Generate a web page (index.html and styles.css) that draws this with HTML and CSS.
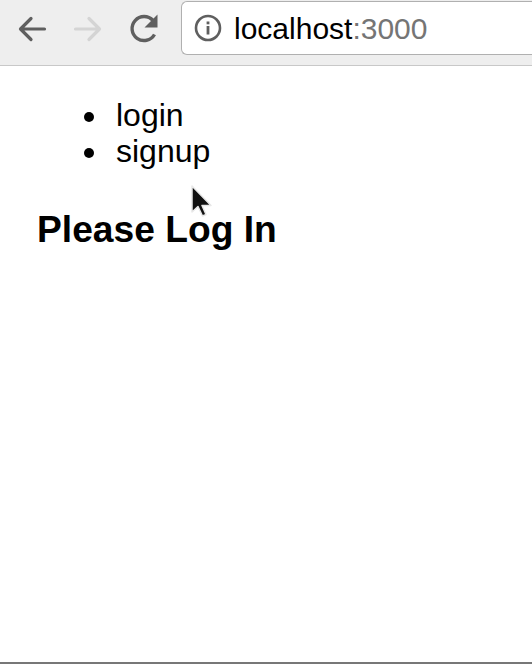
FILE: index.html
```html
<!DOCTYPE html>
<html lang="en">
<head>
    <meta charset="UTF-8">
    <title>localhost:3000</title>
    <link rel="stylesheet" href="styles.css">
</head>
<body>
    <div class="toolbar">
        <svg class="nav-icon" width="36" height="36" viewBox="0 0 36 36">
            <path d="M30.500 18H7M17 7.500 6.500 18 17 28.500" fill="none" stroke="#5f5f5f" stroke-width="3.200" stroke-linecap="round" stroke-linejoin="round"/>
        </svg>
        <svg class="nav-icon" width="36" height="36" viewBox="0 0 36 36">
            <path d="M5.500 18H29M19 7.500 29.500 18 19 28.500" fill="none" stroke="#d4d4d4" stroke-width="3.200" stroke-linecap="round" stroke-linejoin="round"/>
        </svg>
        <svg class="nav-icon" width="36" height="36" viewBox="0 0 36 36">
            <path d="M28.500 23.500A12 12 0 1 1 27 9.500" fill="none" stroke="#5f5f5f" stroke-width="3.400"/>
            <path d="M31.500 3.500V16.500H18.500Z" fill="#5f5f5f"/>
        </svg>
        <div class="address-bar">
            <svg class="info-icon" width="28" height="28" viewBox="0 0 28 28">
                <circle cx="14" cy="14" r="12" fill="none" stroke="#5f5f5f" stroke-width="2.600"/>
                <rect x="12.600" y="7.500" width="2.800" height="2.800" fill="#5f5f5f"/>
                <rect x="12.600" y="12" width="2.800" height="8.500" fill="#5f5f5f"/>
            </svg>
            <span class="url">localhost<span class="url-port">:3000</span></span>
        </div>
    </div>

    <div class="page">
        <ul class="nav-list">
            <li>login</li>
            <li>signup</li>
        </ul>
        <h2 class="title">Please Log In</h2>

        <svg class="cursor" width="24" height="36" viewBox="0 0 24 36">
            <path d="M2 1V27L8 21.500L12.500 31L16 29.500L12 20.500H21Z" fill="#111" stroke="#e8e8e8" stroke-width="1.500" stroke-linejoin="round"/>
        </svg>
    </div>
</body>
</html>
```

FILE: styles.css
```css
html, body {
    height: 100%;
}
body {
    margin: 0;
    display: flex;
    flex-direction: column;
    background: white;
    font-family: "Liberation Sans", Arial, sans-serif;
    color: black;
    border-bottom: 2px solid #777;
    box-sizing: border-box;
}
.toolbar {
    display: flex;
    align-items: flex-start;
    box-sizing: border-box;
    height: 66px;
    padding: 1px 0 0 14px;
    gap: 20px;
    background: #eeeeee;
    border-bottom: 1px solid #c8c8c8;
}
.nav-icon {
    flex: none;
    margin-top: 10px;
}
.address-bar {
    flex: 1;
    display: flex;
    align-items: center;
    box-sizing: border-box;
    height: 54px;
    margin-left: -1px;
    padding-left: 12px;
    background: white;
    border: 1px solid #b0b0b0;
    border-right: none;
    border-radius: 6px 0 0 6px;
}
.url {
    margin: 1px 0 0 12px;
    font-size: 30px;
}
.url-port {
    color: #757575;
}
.page {
    position: relative;
    flex: 1;
}
.nav-list {
    margin: 31px 0 0;
    padding: 0 0 0 84px;
    list-style: none;
    font-size: 32px;
    line-height: 36px;
}
.nav-list li {
    display: flex;
    align-items: center;
    gap: 22px;
}
.nav-list li::before {
    content: "";
    width: 10px;
    height: 10px;
    margin-top: 4px;
    border-radius: 50%;
    background: black;
}
.title {
    margin: 39px 0 0 37px;
    font-size: 37.200px;
    line-height: 42px;
}
.cursor {
    position: absolute;
    left: 190px;
    top: 119px;
}
```
